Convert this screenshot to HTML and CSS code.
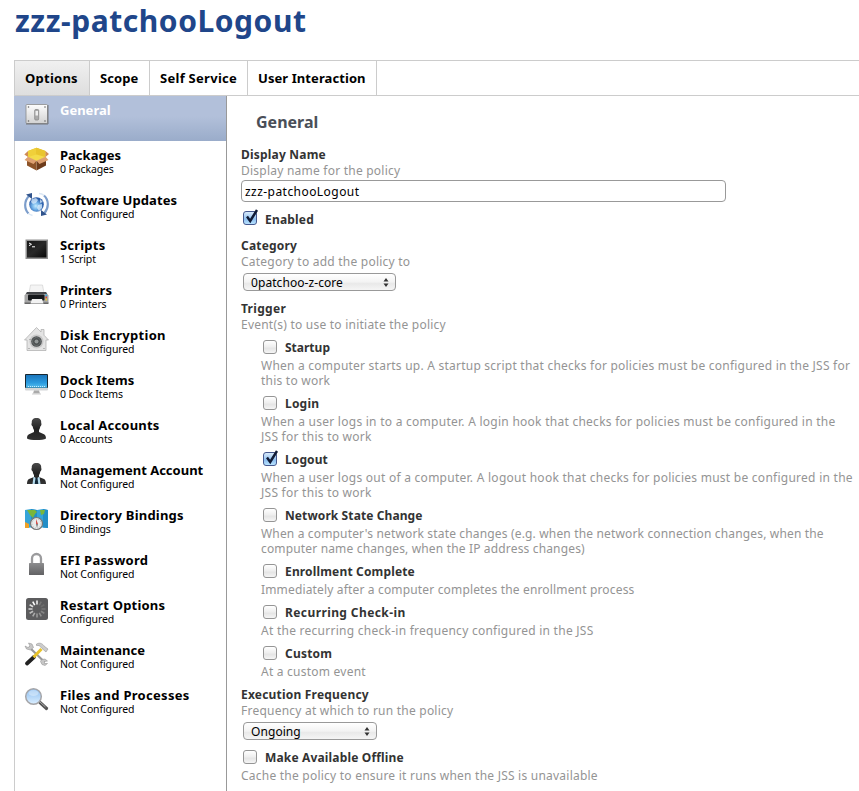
FILE: index.html
```
<!DOCTYPE html>
<html lang="en">
<head>
<meta charset="utf-8">
<title>zzz-patchooLogout</title>
<link rel="stylesheet" href="styles.css">
</head>
<body>
<h1 class="page-title">zzz-patchooLogout</h1>
<nav class="tabs">
  <a class="tab tab-options tab-active">Options</a>
  <a class="tab tab-scope">Scope</a>
  <a class="tab tab-service">Self Service</a>
  <a class="tab tab-interaction">User Interaction</a>
</nav>
<div class="layout">
  <aside class="sidebar">
    <div class="item item-active">
      <svg class="icon" viewBox="0 0 25 25"><defs><linearGradient id="plate" x2="0" y2="1"><stop stop-color="#fdfdfd"/><stop offset="1" stop-color="#d2d2d2"/></linearGradient></defs><rect x="2" y="2.500" width="21.500" height="19" rx="1" fill="url(#plate)" stroke="#8c8c8c" stroke-width=".8"/><path d="M2 22h22V3" fill="none" stroke="#666" stroke-width=".8"/><g fill="#666"><circle cx="4.500" cy="5" r=".8"/><circle cx="21" cy="5" r=".8"/><circle cx="4.500" cy="19" r=".8"/><circle cx="21" cy="19" r=".8"/></g><rect x="10.700" y="7.500" width="4" height="10.500" rx="1" fill="#aaa" stroke="#888" stroke-width=".8"/><rect x="11.500" y="9" width="2.500" height="4.500" fill="#eee"/></svg>
      <div class="item-text"><b>General</b></div>
    </div>
    <div class="item">
      <svg class="icon" viewBox="0 0 25 25"><path d="M12.500 14l9.500-3v7.500l-9.500 5z" fill="#6d3c1c"/><path d="M12.500 14v9.500L3 18.500V11z" fill="#8d5429"/><path d="M4 4L12.500.8 21.500 4v6l-9 4L4 10z" fill="#e3ba24"/><path d="M4 4L12.500.8v8L4 10z" fill="#f0d03a"/><path d="M12.500 .8L21.500 4v6l-9-1.500z" fill="#e9c52e"/><path d="M4 10l8.500-2.500 9 2.500-9 4z" fill="#f4dc4a"/><path d="M4 4v6L.3 7.500zM21.500 4v6l3.500-3z" fill="#cf8c55"/><path d="M4 9.800l8.500 4-3 3.200L.5 13zM21.500 9.800l-9 4 3 3.200 9-4z" fill="#dda071"/></svg>
      <div class="item-text"><b>Packages</b><small>0 Packages</small></div>
    </div>
    <div class="item">
      <svg class="icon" viewBox="0 0 25 25"><defs><radialGradient id="globe" cx=".45" cy=".6"><stop stop-color="#c4ecff"/><stop offset=".5" stop-color="#6fb0e8"/><stop offset="1" stop-color="#2d5ea9"/></radialGradient></defs><circle cx="12.500" cy="12.500" r="7.300" fill="url(#globe)"/><path d="M8 7l4-1 2 2-2 3-3 1-2-2zM14 13l4-1v4l-3 3-2-3zM16 7l3 3-3 1z" fill="#e2f2ff" opacity=".7"/><g fill="none" stroke-width="2.200"><path d="M5 4C0 9 0 17 4.500 21.500" stroke="#7c9dcb"/><path d="M20.500 21C25 16 25 8 20 3.500" stroke="#7c9dcb"/><path d="M20 3.500c-1.500-1.500-3-2-5-2M4.500 21.500c1 1 2.500 1.500 4 2" stroke="#dbe7f4" stroke-width="1.500"/></g><path d="M2 2.500L8 1v6zM23 22.500L17 24v-6z" fill="#31548d"/></svg>
      <div class="item-text"><b class="ls-1">Software Updates</b><small>Not Configured</small></div>
    </div>
    <div class="item">
      <svg class="icon" viewBox="0 0 25 25"><defs><linearGradient id="term" x2="1" y2="1"><stop stop-color="#171717"/><stop offset=".5" stop-color="#292929"/><stop offset="1" stop-color="#080808"/></linearGradient></defs><rect x="1.500" y="2.500" width="22.500" height="19.500" fill="#909090"/><rect x="3" y="4" width="19.500" height="16.500" fill="url(#term)"/><path d="M5 6l2.500 1.300L5 8.600M8 9.800h3" fill="none" stroke="#fff" stroke-width="1"/></svg>
      <div class="item-text"><b class="ls-2">Scripts</b><small>1 Script</small></div>
    </div>
    <div class="item">
      <svg class="icon" viewBox="0 0 25 25"><path d="M6.500 3h12l1.500 8H5z" fill="#f4f4f4" stroke="#ccc" stroke-width=".6"/><path d="M3 10h19l2.500 3.500V21H.5v-7.500z" fill="#a5a5a5"/><path d="M3 10h19l1 2H2z" fill="#44464a"/><rect x="4" y="12.500" width="16.500" height="6" rx="1" fill="#17191c"/><path d="M.5 20.500h24V22H.5z" fill="#666"/><path d="M8 17h10l1.500 4.500h-13z" fill="#f2f2f2"/><path d="M21.500 12.500H23v2h-1.500z" fill="#32a6df"/><path d="M21.500 14.500H23v2h-1.500z" fill="#d43"/><path d="M21.500 16.500H23v2h-1.500z" fill="#e9cb33"/></svg>
      <div class="item-text"><b>Printers</b><small>0 Printers</small></div>
    </div>
    <div class="item">
      <svg class="icon" viewBox="0 0 25 25"><path d="M12.500.5L17 5V2.500h3v5.700L24.500 13H22v10.500H3V13H.5z" fill="#e4e4e4" stroke="#aaa" stroke-width=".7"/><circle cx="12.500" cy="14.500" r="7" fill="#c8c8c8"/><circle cx="12.500" cy="14.500" r="5.300" fill="#4c5051"/><circle cx="12.500" cy="14.500" r="3.900" fill="none" stroke="#8b9090" stroke-dasharray="1 1"/><circle cx="12.500" cy="14.500" r="2" fill="#949999"/><path d="M4.500 21.500h1m14 0h1m-15-9h1" stroke="#888"/></svg>
      <div class="item-text"><b class="ls-3">Disk Encryption</b><small>Not Configured</small></div>
    </div>
    <div class="item">
      <svg class="icon" viewBox="0 0 25 25"><defs><linearGradient id="screen" x2="0" y2="1"><stop stop-color="#1b75bb"/><stop offset=".6" stop-color="#2b9ade"/><stop offset="1" stop-color="#56c0f0"/></linearGradient></defs><rect x="1" y="2" width="23" height="16.500" rx="1" fill="#d4d6d7"/><rect x="1" y="2" width="23" height="14" rx="1" fill="#172731"/><rect x="2" y="3" width="21" height="12.700" fill="url(#screen)"/><path d="M4 14.500h17" stroke="#c5edff" stroke-dasharray="1 1"/><path d="M10 18.500h5l1 3H9z" fill="#aaa"/><path d="M8 21.500h9v1H8z" fill="#ccc"/></svg>
      <div class="item-text"><b class="ls-1">Dock Items</b><small>0 Dock Items</small></div>
    </div>
    <div class="item">
      <svg class="icon" viewBox="0 0 25 25"><defs><linearGradient id="body" x2="0" y2="1"><stop stop-color="#4a4a4a"/><stop offset=".5" stop-color="#222"/><stop offset="1" stop-color="#333"/></linearGradient></defs><path d="M12.500 1c3.500 0 5 2 4.700 5 .8 1-.1 3-.9 3.500-.4 2-.8 3-1.300 3.500v2l5 2.200c1.500.6 2 2.500 2 4.300-3 2-16 2-19 0 0-2 .5-3.700 2-4.300l5-2.200v-2C9.300 12 9 11 8.700 9.500 7.500 8.500 7 7 7.800 6 7.500 3 9 1 12.500 1z" fill="url(#body)"/></svg>
      <div class="item-text"><b class="ls-2">Local Accounts</b><small>0 Accounts</small></div>
    </div>
    <div class="item">
      <svg class="icon" viewBox="0 0 25 25"><path d="M12.500 1c3.500 0 5 2 4.700 5 .8 1-.1 3-.9 3.500-.4 2-.8 3-1.300 3.500v2l5 2c1.500.5 2 3 2 5H3c0-2 .5-4.500 2-5l5-2v-2C9.300 12 9 11 8.700 9.500 7.500 8.500 7 7 7.800 6 7.500 3 9 1 12.500 1z" fill="url(#body)"/><path d="M9.500 14.500l3 2 3-2 1 7.500h-8z" fill="#b5dbed"/><path d="M11.500 16h2l.8 6h-3.600z" fill="#142a3a"/></svg>
      <div class="item-text"><b>Management Account</b><small>Not Configured</small></div>
    </div>
    <div class="item">
      <svg class="icon" viewBox="0 0 25 25"><path d="M1 3l6-1 6 1 6-1 5 1v18l-5-.6-6 .6-6-.6-6 .6z" fill="#35a4d8"/><path d="M7 2l6 1v18l-6-.6zM19 2l5 1v18l-5-.6z" fill="#238ec6"/><path d="M3 3h8l2 2-2 2-2 4-3-3zM16 3h5l-1 4-3 1z" fill="#79b63c"/><path d="M1 15l4 2v4H1z" fill="#efa126"/><circle cx="12.500" cy="16.500" r="6" fill="#e8eceb" stroke="#777" stroke-width="1.200"/><circle cx="12.500" cy="16.500" r="4.500" fill="none" stroke="#bbb" stroke-dasharray="1 1.500"/><path d="M12 12l2 5h-2z" fill="#d34f4a"/><path d="M12 17h2l-1 4z" fill="#777"/></svg>
      <div class="item-text"><b class="ls-2">Directory Bindings</b><small>0 Bindings</small></div>
    </div>
    <div class="item">
      <svg class="icon" viewBox="0 0 25 25"><defs><linearGradient id="lock" x2="0" y2="1"><stop stop-color="#8c8c8e"/><stop offset="1" stop-color="#626264"/></linearGradient></defs><path d="M8 12V6.500a4.500 4.500 0 019 0V12" fill="none" stroke="#9b9b9d" stroke-width="2.300"/><rect x="5" y="11" width="15" height="12" rx=".6" fill="url(#lock)"/></svg>
      <div class="item-text"><b class="ls-3">EFI Password</b><small>Not Configured</small></div>
    </div>
    <div class="item">
      <svg class="icon" viewBox="0 0 25 25"><rect x="2" y="1" width="22" height="22" rx="2.500" fill="#5c5c5e"/><g transform="translate(13 12)" stroke-width="1.600"><path d="M0-4.500v-4" stroke="#eee"/><path d="M0-4.500v-4" transform="rotate(30)" stroke="#777"/><path d="M0-4.500v-4" transform="rotate(60)" stroke="#6d6d6d"/><path d="M0-4.500v-4" transform="rotate(90)" stroke="#777"/><path d="M0-4.500v-4" transform="rotate(120)" stroke="#858585"/><path d="M0-4.500v-4" transform="rotate(150)" stroke="#929292"/><path d="M0-4.500v-4" transform="rotate(180)" stroke="#999"/><path d="M0-4.500v-4" transform="rotate(210)" stroke="#aaa"/><path d="M0-4.500v-4" transform="rotate(240)" stroke="#bbb"/><path d="M0-4.500v-4" transform="rotate(270)" stroke="#ccc"/><path d="M0-4.500v-4" transform="rotate(300)" stroke="#ddd"/><path d="M0-4.500v-4" transform="rotate(330)" stroke="#fff"/></g></svg>
      <div class="item-text"><b class="ls-2">Restart Options</b><small>Configured</small></div>
    </div>
    <div class="item">
      <svg class="icon" viewBox="0 0 25 25"><path d="M5 5l15.500 15" stroke="#999" stroke-width="2.200"/><path d="M1 4l3 1.500L6 4 4.500 1l3.500 1 1.500 3.500-3 2.500-4-1zM17.500 17.500l3.500-.5 2.500 2-3 .5v2l3 0-2.500 2-3-1-1.500-3z" fill="#c7c7c7" stroke="#888" stroke-width=".5"/><path d="M3 21.500l7-6.500" stroke="#222" stroke-width="3.800" stroke-linecap="round"/><path d="M9.500 15.300l8-8.300" stroke="#e8c32a" stroke-width="3"/><path d="M12.500 2c3.500-2 6.500 0 7.500 2l4 3-2 3-4-3.500c-2-2.500-3-3.500-5.500-3z" fill="#ccc" stroke="#888" stroke-width=".5"/></svg>
      <div class="item-text"><b>Maintenance</b><small>Not Configured</small></div>
    </div>
    <div class="item">
      <svg class="icon" viewBox="0 0 25 25"><defs><linearGradient id="lens" x2="0" y2="1"><stop stop-color="#8bbdf0"/><stop offset="1" stop-color="#dcefff"/></linearGradient></defs><path d="M16 15.500l6.500 6" stroke="#555" stroke-width="3.200" stroke-linecap="round"/><path d="M16 15l5.500 5" stroke="#aaa"/><circle cx="9.500" cy="9.500" r="7.800" fill="url(#lens)" stroke="#a5a5a8" stroke-width="1.500"/><ellipse cx="9.500" cy="6" rx="5" ry="3" fill="#fff" opacity=".35"/></svg>
      <div class="item-text"><b class="ls-3">Files and Processes</b><small>Not Configured</small></div>
    </div>
  </aside>
  <main class="main">
    <h2>General</h2>
    <section class="group">
      <div class="label ls-2">Display Name</div>
      <div class="hint">Display name for the policy</div>
      <input class="field" type="text" value="zzz-patchooLogout">
    </section>
    <label class="check enabled"><input class="box" type="checkbox" checked><svg class="tick" viewBox="0 0 16 18"><path d="M4 8.500l3.200 4.500L14 2" fill="none" stroke="#101a35" stroke-width="2.400"/></svg><span class="label ls-2">Enabled</span></label>
    <section class="group">
      <div class="label ls-2">Category</div>
      <div class="hint">Category to add the policy to</div>
      <div class="select select-category">0patchoo-z-core<svg class="arrows" viewBox="0 0 6 9"><path d="M3 0l2.500 3.500h-5zM3 9L.5 5.500h5z" fill="#333"/></svg></div>
    </section>
    <section class="group group-trigger">
      <div class="label ls-3">Trigger</div>
      <div class="hint">Event(s) to use to initiate the policy</div>
      <div class="options">
        <div class="option"><label class="check"><input class="box" type="checkbox"><span class="label">Startup</span></label>
          <div class="hint">When a computer starts up. A startup script that checks for policies must be configured in the JSS for<br>this to work</div></div>
        <div class="option"><label class="check"><input class="box" type="checkbox"><span class="label ls-2">Login</span></label>
          <div class="hint ls-25">When a user logs in to a computer. A login hook that checks for policies must be configured in the<br>JSS for this to work</div></div>
        <div class="option"><label class="check"><input class="box" type="checkbox" checked><svg class="tick" viewBox="0 0 16 18"><path d="M4 8.500l3.200 4.500L14 2" fill="none" stroke="#101a35" stroke-width="2.400"/></svg><span class="label ls-1">Logout</span></label>
          <div class="hint ls-25">When a user logs out of a computer. A logout hook that checks for policies must be configured in the<br>JSS for this to work</div></div>
        <div class="option"><label class="check"><input class="box" type="checkbox"><span class="label ls-1">Network State Change</span></label>
          <div class="hint ls-15">When a computer's network state changes (e.g. when the network connection changes, when the<br>computer name changes, when the IP address changes)</div></div>
        <div class="option"><label class="check"><input class="box" type="checkbox"><span class="label ls-15">Enrollment Complete</span></label>
          <div class="hint ls-15">Immediately after a computer completes the enrollment process</div></div>
        <div class="option"><label class="check"><input class="box" type="checkbox"><span class="label ls-4">Recurring Check-in</span></label>
          <div class="hint ls-25">At the recurring check-in frequency configured in the JSS</div></div>
        <div class="option"><label class="check"><input class="box" type="checkbox"><span class="label ls-2">Custom</span></label>
          <div class="hint">At a custom event</div></div>
      </div>
    </section>
    <section class="group group-frequency">
      <div class="label ls-2">Execution Frequency</div>
      <div class="hint">Frequency at which to run the policy</div>
      <div class="select select-frequency">Ongoing<svg class="arrows" viewBox="0 0 6 9"><path d="M3 0l2.500 3.500h-5zM3 9L.5 5.500h5z" fill="#333"/></svg></div>
    </section>
    <section class="offline">
      <label class="check"><input class="box" type="checkbox"><span class="label ls-15">Make Available Offline</span></label>
      <div class="hint">Cache the policy to ensure it runs when the JSS is unavailable</div>
    </section>
  </main>
</div>
</body>
</html>
```
FILE: styles.css
```
* {
  box-sizing: border-box;
}

body {
  margin: 0;
  height: 791px;
  overflow: hidden;
  display: flex;
  flex-direction: column;
  font-family: "Noto Sans", "Open Sans", sans-serif;
  font-size: 12px;
  line-height: 15px;
  color: #333;
  background: #fff;
}

.page-title {
  margin: 0;
  height: 60px;
  padding-left: 15px;
  font-size: 30px;
  line-height: 42px;
  letter-spacing: .55px;
  color: #20468a;
}

.tabs {
  display: flex;
  margin-left: 14px;
  height: 36px;
  border: 1px solid #ccc;
  border-right: 0;
  font-size: 13px;
  font-weight: bold;
  line-height: 35px;
  color: #000;
}

.tab {
  padding-left: 10px;
  border-right: 1px solid #ccc;
}

.tab-active { background: linear-gradient(#f0f0f0, #dedede); }
.tab-options { width: 75px; letter-spacing: .25px; }
.tab-scope { width: 60px; letter-spacing: .1px; }
.tab-service { width: 98px; letter-spacing: .28px; }
.tab-interaction { width: 129px; letter-spacing: .08px; }

.layout {
  flex: 1;
  display: flex;
  margin-left: 14px;
}

.sidebar {
  width: 213px;
  border-left: 1px solid #ccc;
  border-right: 1px solid #999;
  color: #000;
}

.item {
  display: flex;
  height: 45px;
}

.item-active {
  margin-left: -1px;
  padding-left: 1px;
  color: #fff;
  background: linear-gradient(#b2c0da 45%, #9aacca);
}

.icon {
  width: 25px;
  height: 25px;
  margin: 6px 11px 0 9px;
}

.item-text { padding-top: 6px; }

.item b,
.item small {
  display: block;
  white-space: nowrap;
}

.item b {
  font-size: 13px;
  line-height: 17px;
}

.item small {
  font-size: 10.5px;
  line-height: 10px;
  letter-spacing: -.12px;
}

.main {
  flex: 1;
  padding: 16px 0 0 14px;
  white-space: nowrap;
}

h2 {
  margin: 0 0 15px 15px;
  font-size: 16px;
  line-height: 20px;
  color: #4a4f58;
}

.label { font-weight: bold; }

.hint {
  margin-top: 1px;
  color: #949494;
  letter-spacing: .23px;
}

.ls-1 { letter-spacing: .1px; }
.ls-15 { letter-spacing: .16px; }
.ls-2 { letter-spacing: .2px; }
.ls-25 { letter-spacing: .26px; }
.ls-3 { letter-spacing: .3px; }
.ls-4 { letter-spacing: .4px; }

.field {
  display: block;
  width: 485px;
  height: 22px;
  margin: 2px 0 0;
  padding: 0 3px;
  border: 1px solid #999;
  border-radius: 4px;
  font: inherit;
  letter-spacing: .45px;
  color: #000;
  background: #fff;
}

.check {
  position: relative;
  display: flex;
  height: 15px;
}

.box {
  appearance: none;
  width: 14px;
  height: 14px;
  margin: 0 8px 0 2px;
  border: 1px solid #959595;
  border-radius: 3px;
  background: linear-gradient(#fff, #eee 50%, #e5e5e5 60%, #f5f5f5);
}

.box:checked {
  border-color: #46598f;
  background: linear-gradient(#d8eafb, #8fc0f0 60%, #b8e3ff);
}

.tick {
  position: absolute;
  left: 2px;
  top: -3px;
  width: 16px;
  height: 18px;
}

.enabled { margin: 10px 0 11px; }
.enabled .box { margin-top: -1px; margin-bottom: 1px; }
.enabled .tick { top: -4px; }

.select {
  position: relative;
  height: 18px;
  margin: 4px 0 0 2px;
  padding-left: 7px;
  border: 1px solid #999;
  border-radius: 4px;
  line-height: 17px;
  letter-spacing: .07px;
  color: #000;
  background: linear-gradient(#fff, #f3f3f3 50%, #e9e9e9 60%, #f5f5f5);
}

.select-category { width: 153px; }
.select-frequency { width: 134px; }

.arrows {
  position: absolute;
  right: 6px;
  top: 4px;
  width: 6px;
  height: 9px;
}

.group-trigger { margin-top: 10px; }
.options { padding-left: 20px; }
.option { padding-top: 8px; }

.option .hint,
.offline .hint { margin-top: 3px; }

.group-frequency { margin-top: 8px; }
.offline { margin-top: 10px; }
```
